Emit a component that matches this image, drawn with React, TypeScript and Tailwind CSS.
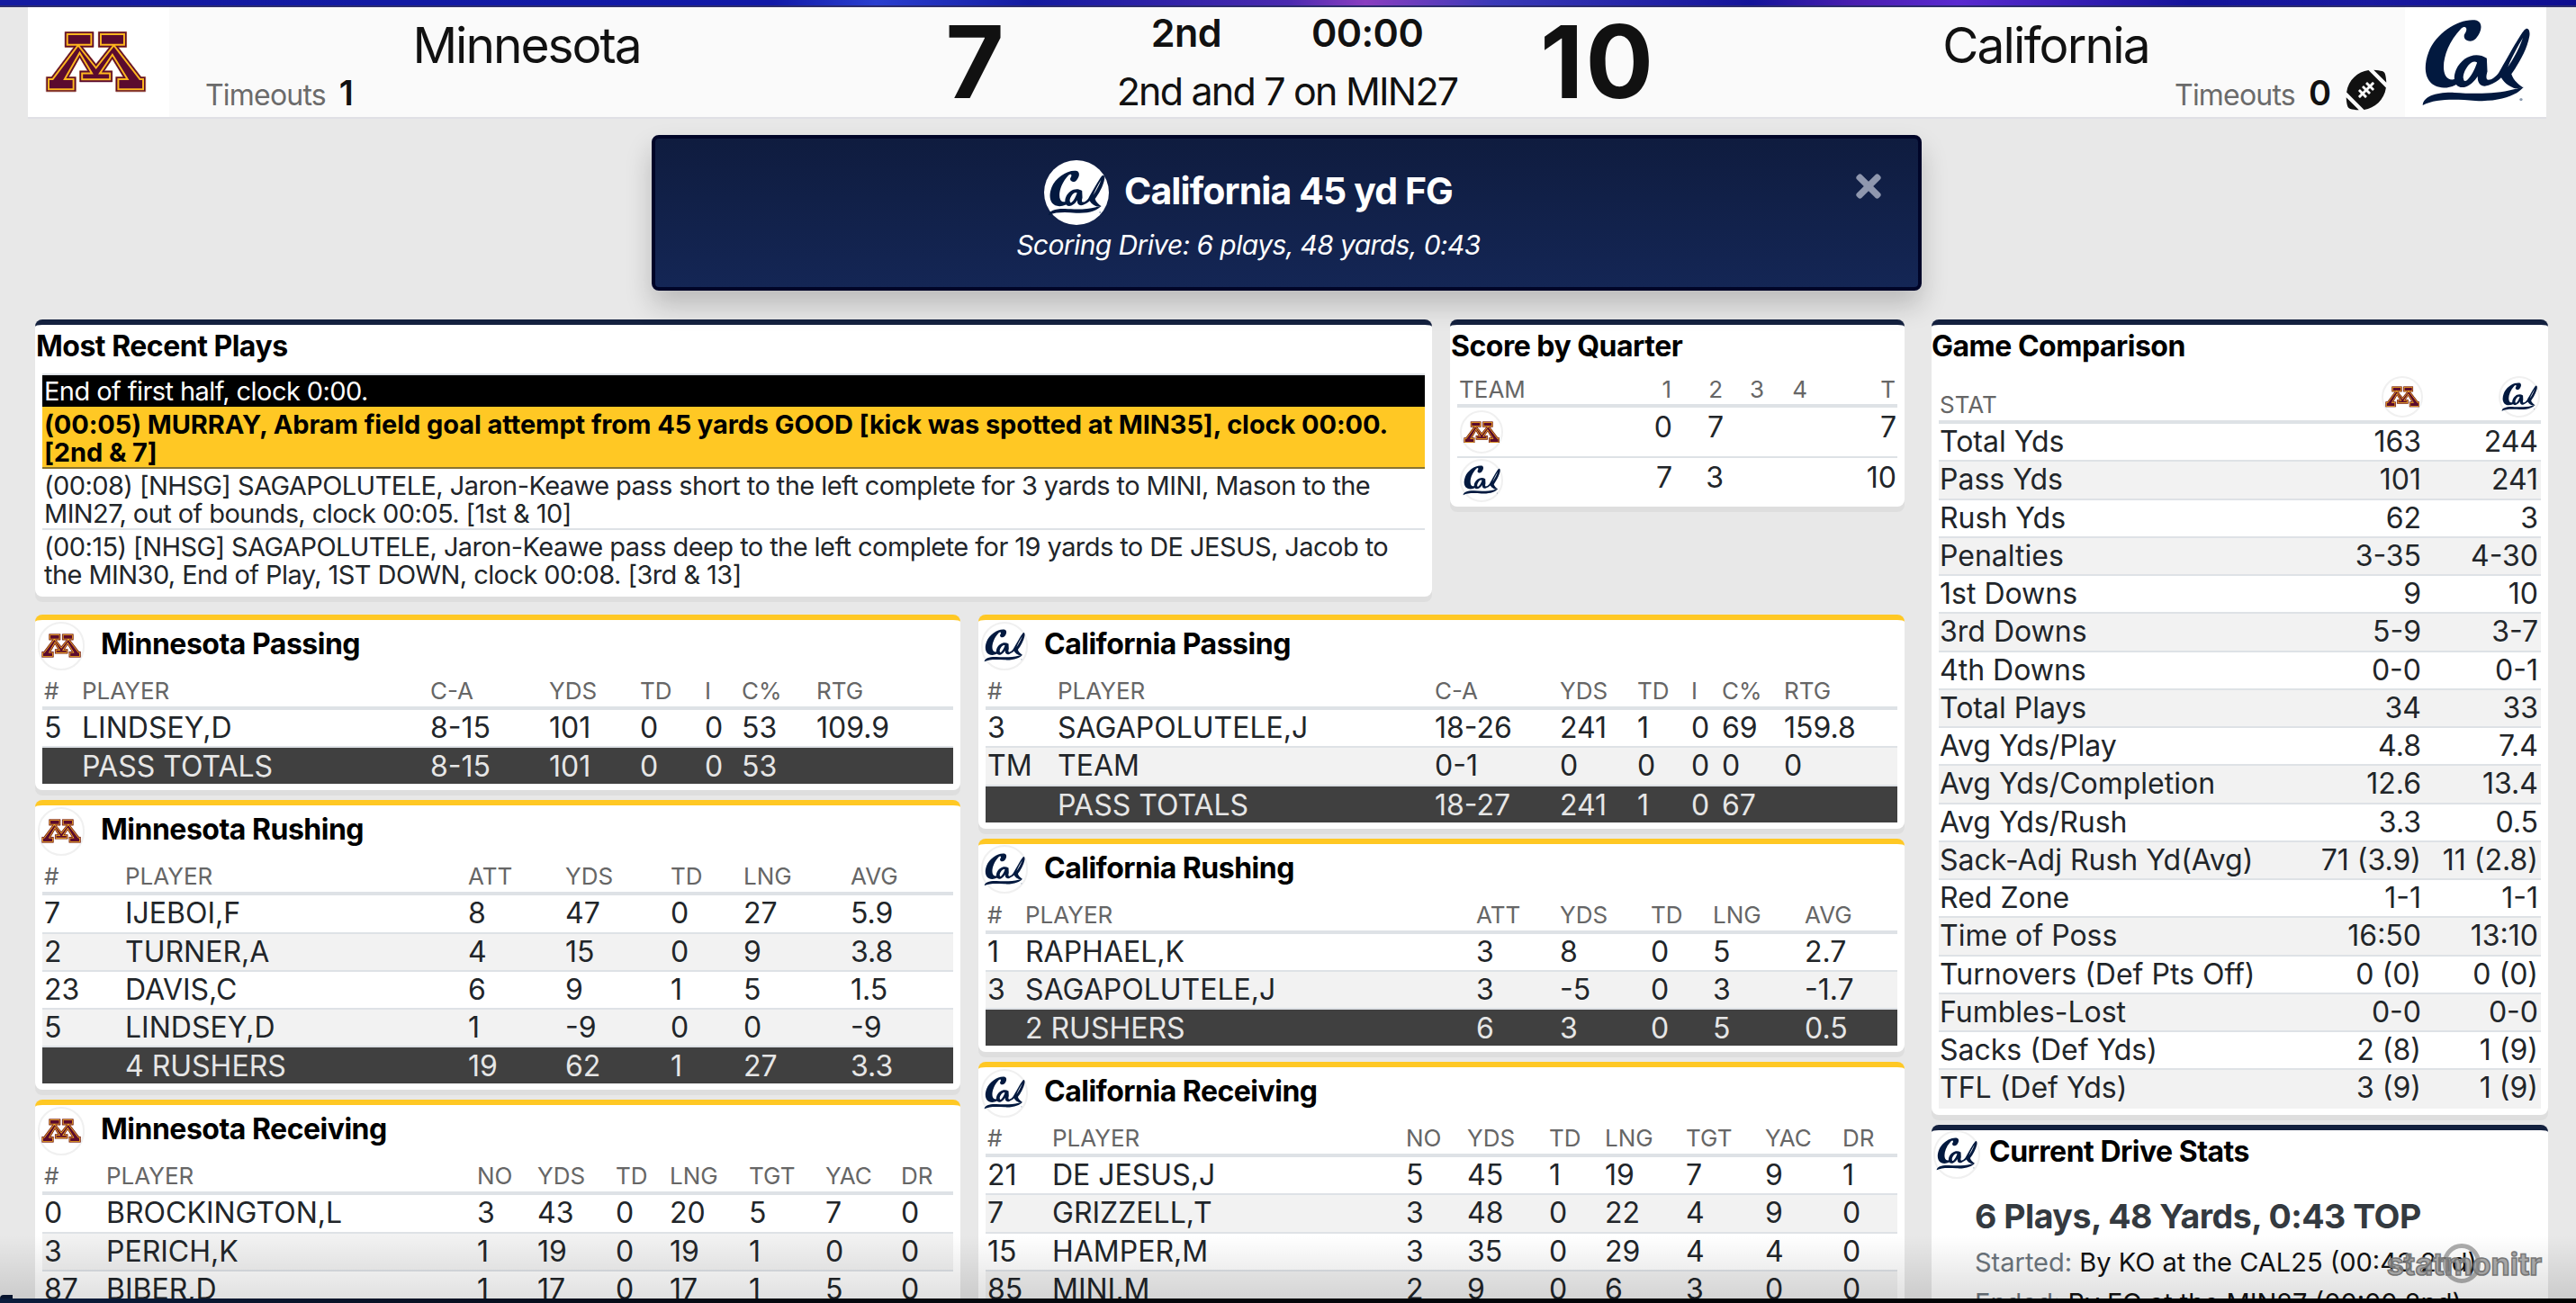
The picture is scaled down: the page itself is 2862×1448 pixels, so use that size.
import { useId } from "react";
import { FaFootballBall, FaTimes } from "react-icons/fa";

const M_PATH =
  "M215 103H312V155H275L320 212L365 155H328V103H423V155H395L472 255H487V305H387V255H412L375 195L348 235H375V272H265V235H292L265 190L228 255H252V305H152V255H170L245 155H215Z";

const MLogo = ({ className }: { className: string }) => {
  const id = useId();
  return (
    <svg viewBox="148 99 343 210" className={className}>
      <clipPath id={id}>
        <path d={M_PATH} />
      </clipPath>
      <path d={M_PATH} fill="#5b0b2e" stroke="#b58a9c" strokeWidth="3" />
      <path d={M_PATH} fill="none" stroke="#ffb71e" strokeWidth="22" clipPath={`url(#${id})`} />
      <path d={M_PATH} fill="none" stroke="#5b0b2e" strokeWidth="10" clipPath={`url(#${id})`} />
    </svg>
  );
};

const CalLogo = ({ className }: { className: string }) => (
  <svg viewBox="390 45 365 290" className={className} fill="#02193f">
    <path d="M575 50C520 40 440 90 415 155C392 215 405 272 465 274C492 274 515 260 532 246L524 236C502 250 480 252 470 232C455 200 472 130 522 78C537 64 548 76 534 96C526 116 556 128 572 110C592 88 596 58 575 50Z" />
    <path
      fillRule="evenodd"
      d="M608 176C570 152 526 172 506 214C490 252 508 282 540 270C558 263 568 250 578 236C576 262 592 274 614 266C632 259 646 250 656 240C668 262 690 272 702 276L730 274C712 262 696 248 690 228C712 198 742 148 750 102C753 82 744 70 733 82C712 108 676 176 648 224C638 238 624 248 614 248C604 248 606 234 610 220ZM576 190C560 180 542 200 532 226C526 246 532 256 542 249C556 238 568 212 576 190ZM728 108C712 135 692 170 678 205C692 185 716 145 728 108Z"
    />
    <path d="M395 332C398 302 440 288 500 290C560 294 640 296 695 280L730 272C708 300 650 322 570 317C500 312 440 310 395 332Z" />
    <circle cx="722" cy="313" r="5" fill="#8a9ab0" />
  </svg>
);

const Badge = ({ team, size = "w-[52px] h-[54px]" }: { team: "min" | "cal"; size?: string }) => (
  <div className={`${size} shrink-0 rounded-full border-2 border-[#f0f0f0] bg-white flex items-center justify-center`}>
    {team === "min" ? <MLogo className="w-[92%]" /> : <CalLogo className="w-[96%]" />}
  </div>
);

type TableProps = {
  cols: string;
  head: string[];
  rows: string[][];
  total?: string[];
};

const StatTable = ({ cols, head, rows, total }: TableProps) => (
  <div className="mx-2 mt-[6px]">
    <div className={`grid ${cols} h-[38px] border-b-4 border-[#dee2e6] pl-[2px] text-[26px] leading-[34px] text-[#666]`}>
      {head.map((h, i) => (
        <div key={i} className="whitespace-nowrap">{h}</div>
      ))}
    </div>
    {rows.map((r, i) => (
      <div
        key={i}
        className={`grid ${cols} h-[42.25px] border-b-2 border-[#dee2e6] pl-[2px] text-[32px] leading-[40px] text-[#212529] ${i % 2 === 1 ? "bg-[#f2f2f2]" : ""}`}
      >
        {r.map((c, j) => (
          <div key={j} className="whitespace-nowrap">{c}</div>
        ))}
      </div>
    ))}
    {total && (
      <div className={`grid ${cols} h-[40px] bg-[#404040] pl-[2px] text-[32px] leading-[42px] text-[#e6e6e6]`}>
        {total.map((c, j) => (
          <div key={j} className="whitespace-nowrap">{c}</div>
        ))}
      </div>
    )}
  </div>
);

const TeamCard = ({ team, title, table }: { team: "min" | "cal"; title: string; table: TableProps }) => (
  <section className="rounded-lg border-t-[6px] border-[#ffc824] bg-white pb-[7px] shadow-[0_6px_0_#dedede]">
    <div className="mt-px flex h-[55px] items-center gap-[18px] pl-[3px]">
      <Badge team={team} />
      <h3 className="pb-[3px] text-[32px] font-bold tracking-[-0.5px] text-black">{title}</h3>
    </div>
    <StatTable {...table} />
  </section>
);

const comparison = [
  ["Total Yds", "163", "244"],
  ["Pass Yds", "101", "241"],
  ["Rush Yds", "62", "3"],
  ["Penalties", "3-35", "4-30"],
  ["1st Downs", "9", "10"],
  ["3rd Downs", "5-9", "3-7"],
  ["4th Downs", "0-0", "0-1"],
  ["Total Plays", "34", "33"],
  ["Avg Yds/Play", "4.8", "7.4"],
  ["Avg Yds/Completion", "12.6", "13.4"],
  ["Avg Yds/Rush", "3.3", "0.5"],
  ["Sack-Adj Rush Yd(Avg)", "71 (3.9)", "11 (2.8)"],
  ["Red Zone", "1-1", "1-1"],
  ["Time of Poss", "16:50", "13:10"],
  ["Turnovers (Def Pts Off)", "0 (0)", "0 (0)"],
  ["Fumbles-Lost", "0-0", "0-0"],
  ["Sacks (Def Yds)", "2 (8)", "1 (9)"],
  ["TFL (Def Yds)", "3 (9)", "1 (9)"],
];

const Timeouts = ({ n }: { n: string }) => (
  <div className="flex items-baseline gap-[15px] leading-[40px]">
    <span className="text-[32px] tracking-[-0.8px] text-[#6b6b6b]">Timeouts</span>
    <span className="text-[38px] font-semibold text-[#111]">{n}</span>
  </div>
);

export default function App() {
  return (
    <div className="relative h-[1448px] w-[2862px] overflow-hidden bg-[#e8e8e8] font-['Inter',sans-serif]">
      <div className="h-[8px] border-b-2 border-[#2c2c6e] bg-[linear-gradient(90deg,#141ba0_0%,#121aa8_30%,#2a3fd0_34%,#141ba0_40%,#4a2ab0_50%,#8a3ec0_53%,#3a3ab8_58%,#14149a_68%,#4a1fb0_72%,#5a2ad0_76%,#14149a_85%,#1a1aa0_92%,#0e0e90_100%)]" />

      {/* scoreboard */}
      <header className="ml-[31px] flex h-[122px] w-[2798px] bg-[#fafafa] text-[#111] shadow-[0_2px_0_#e0e0e5]">
        <div className="flex w-[157px] items-center justify-center bg-white pr-[6px]">
          <MLogo className="w-[113px]" />
        </div>
        <div className="w-[794px] pt-[12px]">
          <div className="text-center text-[55px] leading-[60px] tracking-[-2px]">Minnesota</div>
          <div className="mt-[3px] pl-[40px]">
            <Timeouts n="1" />
          </div>
        </div>
        <div className="w-[202px] pt-[6px] text-center text-[112px] font-bold leading-[108px]">7</div>
        <div className="w-[492px] pt-[3px] text-center">
          <div className="flex justify-center gap-[100px] text-[43px] font-semibold leading-[50px] tracking-[-0.6px]">
            <span>2nd</span>
            <span>00:00</span>
          </div>
          <div className="mt-[15px] text-[43px] leading-[50px] tracking-[-1.8px]">2nd and 7 on MIN27</div>
        </div>
        <div className="w-[198px] pt-[6px] text-center text-[112px] font-bold leading-[108px] tracking-[2px]">10</div>
        <div className="w-[798px] pt-[12px]">
          <div className="text-center text-[55px] leading-[60px] tracking-[-1.8px]">California</div>
          <div className="mt-[3px] flex items-start justify-end gap-[16px] pr-[20px]">
            <Timeouts n="0" />
            <FaFootballBall className="-mt-[6px] h-[46px] w-[46px] text-[#111]" />
          </div>
        </div>
        <div className="flex w-[157px] items-center justify-center bg-white">
          <CalLogo className="w-[122px]" />
        </div>
      </header>

      {/* scoring alert */}
      <div className="relative ml-[724px] mt-[20px] h-[173px] w-[1411px] rounded-lg border-4 border-[#000528] bg-[linear-gradient(180deg,#0f1c3f,#142655)] pr-[85px] pt-[24px] text-center text-white shadow-[0_16px_30px_rgba(0,0,0,0.2)]">
        <div className="flex items-center justify-center gap-[17px]">
          <div className="flex h-[72px] w-[72px] items-center justify-center rounded-full bg-white">
            <CalLogo className="w-[64px]" />
          </div>
          <span className="pb-[3px] text-[41px] font-bold tracking-[-0.9px]">California 45 yd FG</span>
        </div>
        <div className="mt-[2px] text-[30px] italic leading-[40px] tracking-[-0.6px]">Scoring Drive: 6 plays, 48 yards, 0:43</div>
        <FaTimes className="absolute right-[35px] top-[33px] h-[40px] w-[40px] text-[#8f97ae]" />
      </div>

      <main className="ml-[39px] mt-[32px] flex w-[2792px] items-start gap-[30px]">
        <div className="w-[2077px]">
          <div className="flex items-start gap-[20px]">
            <section className="w-[1552px] rounded-lg border-t-[6px] border-[#14213f] bg-white pb-[8px] shadow-[0_6px_0_#dedede]">
              <h3 className="h-[54px] pl-px text-[32px] font-bold leading-[48px] tracking-[-0.5px] text-black">Most Recent Plays</h3>
              <div className="mx-2 border-t-2 border-[#dee2e6] text-[29px] leading-[31px] tracking-[-0.57px] text-[#212529]">
                <div className="h-[35px] bg-black pl-[2px] pt-[2px] text-white">End of first half, clock 0:00.</div>
                <div className="h-[69px] border-b-2 border-[#8a7430] bg-[#ffc824] pl-[2px] pt-[4px] font-bold tracking-[-0.1px] text-black">
                  (00:05) MURRAY, Abram field goal attempt from 45 yards GOOD [kick was spotted at MIN35], clock 00:00. [2nd &amp; 7]
                </div>
                <div className="h-[68px] border-b-2 border-[#dee2e6] px-[2px] pt-[3px]">
                  (00:08) [NHSG] SAGAPOLUTELE, Jaron-Keawe pass short to the left complete for 3 yards to MINI, Mason to the MIN27, out of bounds, clock 00:05. [1st &amp; 10]
                </div>
                <div className="h-[66px] px-[2px] pt-[3px]">
                  (00:15) [NHSG] SAGAPOLUTELE, Jaron-Keawe pass deep to the left complete for 19 yards to DE JESUS, Jacob to the MIN30, End of Play, 1ST DOWN, clock 00:08. [3rd &amp; 13]
                </div>
              </div>
            </section>

            <section className="w-[505px] rounded-lg border-t-[6px] border-[#14213f] bg-white shadow-[0_6px_0_#dedede]">
              <h3 className="h-[56px] pl-px text-[32px] font-bold leading-[48px] tracking-[-0.5px] text-black">Score by Quarter</h3>
              <div className="mx-2">
                <div className="grid h-[36px] grid-cols-[181px_55px_57px_46px_48px_98px] border-b-4 border-[#dee2e6] pl-[2px] text-[26px] leading-[32px] text-[#666]">
                  <div>TEAM</div>
                  <div className="text-right">1</div>
                  <div className="text-right">2</div>
                  <div className="text-right">3</div>
                  <div className="text-right">4</div>
                  <div className="text-right">T</div>
                </div>
                <div className="grid h-[56px] grid-cols-[181px_55px_57px_46px_48px_98px] border-b-2 border-[#dee2e6] pl-[3px] text-[32px] leading-[44px] text-[#212529]">
                  <div className="pt-[3px]"><Badge team="min" size="w-[48px] h-[48px]" /></div>
                  <div className="text-right">0</div>
                  <div className="text-right">7</div>
                  <div />
                  <div />
                  <div className="text-right">7</div>
                </div>
                <div className="grid h-[54px] grid-cols-[181px_55px_57px_46px_48px_98px] pl-[3px] text-[32px] leading-[44px] text-[#212529]">
                  <div className="pt-[1px]"><Badge team="cal" size="w-[48px] h-[48px]" /></div>
                  <div className="text-right">7</div>
                  <div className="text-right">3</div>
                  <div />
                  <div />
                  <div className="text-right">10</div>
                </div>
              </div>
            </section>
          </div>

          <div className="mt-[20px] flex items-start gap-[20px]">
            <div className="flex w-[1028px] flex-col gap-[11px]">
              <TeamCard
                team="min"
                title="Minnesota Passing"
                table={{
                  cols: "grid-cols-[42px_387px_132px_101px_72px_41px_83px_1fr]",
                  head: ["#", "PLAYER", "C-A", "YDS", "TD", "I", "C%", "RTG"],
                  rows: [["5", "LINDSEY,D", "8-15", "101", "0", "0", "53", "109.9"]],
                  total: ["", "PASS TOTALS", "8-15", "101", "0", "0", "53", ""],
                }}
              />
              <TeamCard
                team="min"
                title="Minnesota Rushing"
                table={{
                  cols: "grid-cols-[90px_381px_108px_117px_81px_119px_1fr]",
                  head: ["#", "PLAYER", "ATT", "YDS", "TD", "LNG", "AVG"],
                  rows: [
                    ["7", "IJEBOI,F", "8", "47", "0", "27", "5.9"],
                    ["2", "TURNER,A", "4", "15", "0", "9", "3.8"],
                    ["23", "DAVIS,C", "6", "9", "1", "5", "1.5"],
                    ["5", "LINDSEY,D", "1", "-9", "0", "0", "-9"],
                  ],
                  total: ["", "4 RUSHERS", "19", "62", "1", "27", "3.3"],
                }}
              />
              <TeamCard
                team="min"
                title="Minnesota Receiving"
                table={{
                  cols: "grid-cols-[69px_412px_67px_87px_60px_88px_85px_84px_1fr]",
                  head: ["#", "PLAYER", "NO", "YDS", "TD", "LNG", "TGT", "YAC", "DR"],
                  rows: [
                    ["0", "BROCKINGTON,L", "3", "43", "0", "20", "5", "7", "0"],
                    ["3", "PERICH,K", "1", "19", "0", "19", "1", "0", "0"],
                    ["87", "BIBER,D", "1", "17", "0", "17", "1", "5", "0"],
                  ],
                }}
              />
            </div>

            <div className="flex w-[1029px] flex-col gap-[11px]">
              <TeamCard
                team="cal"
                title="California Passing"
                table={{
                  cols: "grid-cols-[78px_419px_139px_86px_60px_34px_69px_1fr]",
                  head: ["#", "PLAYER", "C-A", "YDS", "TD", "I", "C%", "RTG"],
                  rows: [
                    ["3", "SAGAPOLUTELE,J", "18-26", "241", "1", "0", "69", "159.8"],
                    ["TM", "TEAM", "0-1", "0", "0", "0", "0", "0"],
                  ],
                  total: ["", "PASS TOTALS", "18-27", "241", "1", "0", "67", ""],
                }}
              />
              <TeamCard
                team="cal"
                title="California Rushing"
                table={{
                  cols: "grid-cols-[42px_501px_93px_101px_69px_102px_1fr]",
                  head: ["#", "PLAYER", "ATT", "YDS", "TD", "LNG", "AVG"],
                  rows: [
                    ["1", "RAPHAEL,K", "3", "8", "0", "5", "2.7"],
                    ["3", "SAGAPOLUTELE,J", "3", "-5", "0", "3", "-1.7"],
                  ],
                  total: ["", "2 RUSHERS", "6", "3", "0", "5", "0.5"],
                }}
              />
              <TeamCard
                team="cal"
                title="California Receiving"
                table={{
                  cols: "grid-cols-[72px_393px_68px_91px_62px_90px_88px_86px_1fr]",
                  head: ["#", "PLAYER", "NO", "YDS", "TD", "LNG", "TGT", "YAC", "DR"],
                  rows: [
                    ["21", "DE JESUS,J", "5", "45", "1", "19", "7", "9", "1"],
                    ["7", "GRIZZELL,T", "3", "48", "0", "22", "4", "9", "0"],
                    ["15", "HAMPER,M", "3", "35", "0", "29", "4", "4", "0"],
                    ["85", "MINI,M", "2", "9", "0", "6", "3", "0", "0"],
                  ],
                }}
              />
            </div>
          </div>
        </div>

        <div className="flex w-[685px] flex-col gap-[11px]">
          <section className="rounded-lg border-t-[6px] border-[#14213f] bg-white pb-[7px] shadow-[0_6px_0_#dedede]">
            <h3 className="h-[57px] text-[32px] font-bold leading-[48px] tracking-[-0.5px] text-black">Game Comparison</h3>
            <div className="mx-2">
              <div className="grid h-[53px] grid-cols-[1fr_130px_130px] items-end border-b-4 border-[#dee2e6] pl-px pr-[1px] text-[26px] leading-[34px] text-[#666]">
                <div>STAT</div>
                <div className="flex justify-end pb-[3px]"><Badge team="min" size="w-[46px] h-[46px]" /></div>
                <div className="flex justify-end pb-[3px]"><Badge team="cal" size="w-[46px] h-[46px]" /></div>
              </div>
              {comparison.map((r, i) => (
                <div
                  key={r[0]}
                  className={`grid h-[42.25px] grid-cols-[1fr_130px_130px] pl-px pr-[3px] text-[32px] leading-[40px] text-[#212529] ${i % 2 === 1 ? "bg-[#f2f2f2]" : ""} ${i < comparison.length - 1 ? "border-b-2 border-[#dee2e6]" : ""}`}
                >
                  <div className="whitespace-nowrap">{r[0]}</div>
                  <div className="whitespace-nowrap text-right">{r[1]}</div>
                  <div className="whitespace-nowrap text-right">{r[2]}</div>
                </div>
              ))}
            </div>
          </section>

          <section className="h-[400px] rounded-lg border-t-[6px] border-[#14213f] bg-white">
            <div className="flex h-[54px] items-center gap-[10px] pl-[2px]">
              <Badge team="cal" />
              <h3 className="pb-[6px] text-[32px] font-bold tracking-[-0.5px] text-black">Current Drive Stats</h3>
            </div>
            <div className="pl-[48px] pt-[19px]">
              <div className="text-[37.5px] font-bold leading-[46px] tracking-[-0.5px] text-[#343a40]">6 Plays, 48 Yards, 0:43 TOP</div>
              <div className="mt-[5px] text-[29px] leading-[45px] text-[#111]">
                <span className="text-[#6c757d]">Started:</span> By KO at the CAL25 (00:43 2nd)
              </div>
              <div className="text-[29px] leading-[45px] text-[#111]">
                <span className="text-[#6c757d]">Ended:</span> By FG at the MIN27 (00:00 2nd)
              </div>
            </div>
          </section>
        </div>
      </main>

      {/* watermark and window edge sit over the page */}
      <div className="absolute left-[2650px] top-[1382px] flex h-[44px] w-[176px] items-center justify-center text-[34px] font-bold text-[#9a9a9a]/80 [-webkit-text-stroke:1.5px_#7c7c7c]">
        statmonitr
      </div>
      <div className="absolute left-[2714px] top-[1382px] h-[44px] w-[42px] rounded-full border-[5px] border-[#8a8a8a]/70" />
      <div className="pointer-events-none absolute inset-x-0 bottom-[5px] h-[70px] bg-[linear-gradient(180deg,rgba(0,0,0,0),rgba(0,0,0,0.12))]" />
      <div className="absolute bottom-[5px] left-0 h-[4px] w-[14px] rounded-tl-sm bg-[#07142e]" />
      <div className="absolute inset-x-0 bottom-0 h-[5px] bg-[linear-gradient(90deg,#0a1c3c,#04080f_30%,#000_100%)]" />
    </div>
  );
}
